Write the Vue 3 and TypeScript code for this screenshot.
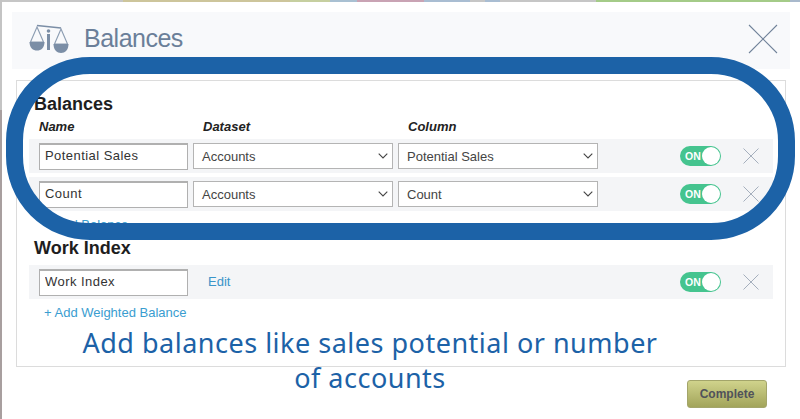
<script setup lang="ts">
interface Balance { name: string; dataset: string; column: string }
const balances: Balance[] = [
  { name: 'Potential Sales', dataset: 'Accounts', column: 'Potential Sales' },
  { name: 'Count', dataset: 'Accounts', column: 'Count' },
]
</script>

<template>
  <div class="page">
    <div class="backdrop-strip"></div>
    <main class="modal">
      <header class="head">
        <svg class="scale" viewBox="0 0 40 32" width="40" height="32">
          <path d="M8 2.5 L32 5" stroke="#7b8ea6" stroke-width="1.4" fill="none" />
          <circle cx="19.5" cy="8" r="1.8" fill="#7b8ea6" />
          <rect x="18" y="11" width="3" height="16" fill="#7b8ea6" />
          <path d="M8 4 L1.5 19 H14.5 Z M32 6 L25.5 21 H38.5 Z" stroke="#8c9db2" stroke-width="1.1" fill="none" />
          <path d="M0.5 19 H15.5 C15.5 25 12 27.5 8 27.5 C4 27.5 0.5 25 0.5 19 Z" fill="#7b8ea6" />
          <path d="M24.5 21 H39.5 C39.5 27 36 30 32 30 C28 30 24.5 27 24.5 21 Z" fill="#7b8ea6" />
        </svg>
        <h1 class="title">Balances</h1>
        <svg class="close" viewBox="0 0 30 30" width="30" height="30">
          <path d="M1 1 L29 29 M29 1 L1 29" stroke="#71839a" stroke-width="1.1" fill="none" />
        </svg>
      </header>

      <section class="panel">
        <h2 class="section-title">Balances</h2>
        <div class="labels">
          <span class="label-name">Name</span>
          <span class="label-dataset">Dataset</span>
          <span>Column</span>
        </div>

        <div v-for="b in balances" :key="b.name" class="row">
          <input class="name-input" :value="b.name" />
          <div class="select"><span>{{ b.dataset }}</span>
            <svg class="chev" viewBox="0 0 10 6" width="10" height="6"><path d="M.7 .7 L5 5 L9.3 .7" stroke="#444" stroke-width="1.1" fill="none" /></svg>
          </div>
          <div class="select"><span>{{ b.column }}</span>
            <svg class="chev" viewBox="0 0 10 6" width="10" height="6"><path d="M.7 .7 L5 5 L9.3 .7" stroke="#444" stroke-width="1.1" fill="none" /></svg>
          </div>
          <div class="toggle"><span>ON</span><i class="knob"></i></div>
          <svg class="row-x" viewBox="0 0 16 16" width="16" height="16"><path d="M.5 .5 L15.5 15.5 M15.5 .5 L.5 15.5" stroke="#a5afbd" stroke-width="1" fill="none" /></svg>
        </div>
        <a class="add add-balance">+ Add Balance</a>

        <h2 class="section-title work">Work Index</h2>
        <div class="row work-row">
          <input class="name-input" value="Work Index" />
          <a class="edit">Edit</a>
          <div class="toggle"><span>ON</span><i class="knob"></i></div>
          <svg class="row-x" viewBox="0 0 16 16" width="16" height="16"><path d="M.5 .5 L15.5 15.5 M15.5 .5 L.5 15.5" stroke="#a5afbd" stroke-width="1" fill="none" /></svg>
        </div>
        <a class="add">+ Add Weighted Balance</a>
      </section>

      <footer class="foot">
        <button class="complete">Complete</button>
      </footer>
    </main>

    <div class="oval"></div>
    <p class="note">Add balances like sales potential or number<br />of accounts</p>
  </div>
</template>

<style>
html, body { margin: 0; background: #fff; }
</style>

<style scoped>
.page {
  position: relative;
  width: 800px;
  height: 419px;
  overflow: hidden;
  background: #fff;
  font-family: "Liberation Sans", Arial, sans-serif;
  color: #222;
}
.page::before {
  content: "";
  position: absolute;
  left: 0;
  top: 0;
  width: 2px;
  height: 100%;
  background: linear-gradient(#c4c4c4 0 110px, #a89f9f 110px);
}
.backdrop-strip {
  height: 2px;
  background: linear-gradient(90deg,
    #c6c6c6 0 123px, #cdc59b 123px 290px, #c6cfa0 290px 330px, #a9c0d2 330px 357px,
    #c9a3b4 357px 424px, #a9bdd2 424px 470px, #c6c6c6 470px 485px, #a9bdd2 485px 500px,
    #c6c6c6 500px 596px, #a4cb88 596px 790px, #a9b9cc 790px);
}
.modal {
  padding: 10px 10px 0 12px;
}
.head {
  display: flex;
  align-items: center;
  height: 57px;
  width: 778px;
  padding: 0 12px 4px 17px;
  box-sizing: border-box;
  background: #f8f9fb;
}
.scale { flex: none; }
.title {
  flex: 1;
  margin: 0 0 0 15px;
  font-size: 25px;
  font-weight: 400;
  letter-spacing: -0.5px;
  color: #6b7f99;
}
.panel {
  box-sizing: border-box;
  width: 770px;
  height: 287px;
  margin: 11px 0 0 4px;
  padding: 13px 12px 0 12px;
  border: 1px solid #dcdcdc;
  display: flex;
  flex-direction: column;
}
.section-title {
  margin: 0;
  padding-left: 5px;
  font-size: 18px;
  line-height: 20px;
  font-weight: 700;
  color: #1e1e1e;
}
.labels {
  display: flex;
  padding-left: 10px;
  margin: 5px 0 5px;
  font-size: 13px;
  line-height: 15px;
  font-weight: 700;
  font-style: italic;
  color: #222;
}
.label-name { width: 164px; }
.label-dataset { width: 205px; }
.row {
  display: flex;
  align-items: center;
  width: 744px;
  height: 34px;
  margin-bottom: 4px;
  padding-left: 10px;
  box-sizing: border-box;
  background: #f4f5f7;
}
.name-input {
  box-sizing: border-box;
  width: 149px;
  height: 27px;
  padding: 0 5px 2px;
  border: 1px solid #b0b0b0;
  border-width: 2px 1px 1px 1px;
  border-radius: 0;
  outline: none;
  background: #fff;
  font: 13px "Liberation Sans", Arial, sans-serif;
  letter-spacing: .45px;
  color: #333;
}
.select {
  position: relative;
  box-sizing: border-box;
  width: 200px;
  height: 26px;
  margin-left: 5px;
  padding-left: 8px;
  display: flex;
  align-items: center;
  border: 1px solid #b4b4b4;
  background: #fff;
  font-size: 13px;
  color: #444;
}
.chev { position: absolute; right: 4px; top: 9px; }
.toggle {
  position: relative;
  box-sizing: border-box;
  width: 41px;
  height: 20px;
  margin-left: auto;
  padding-left: 5px;
  border-radius: 10px;
  background: #45c48f;
  display: flex;
  align-items: center;
  font-size: 10.5px;
  font-weight: 700;
  color: #fff;
}
.knob {
  position: absolute;
  right: 1px;
  top: 1px;
  width: 18px;
  height: 18px;
  border-radius: 50%;
  background: #fff;
}
.row-x { margin: 0 14px 0 22px; flex: none; }
.add {
  margin: 4px 0 0 15px;
  font-size: 13px;
  line-height: 15px;
  color: #3a9dd0;
}
.add-balance { margin-top: 2px; }
.work { margin-top: 6px; }
.work-row { margin: 7px 0 2px; }
.edit {
  margin-left: 20px;
  padding-bottom: 1px;
  font-size: 13px;
  color: #3a94c9;
}
.foot {
  display: flex;
  justify-content: flex-end;
  padding: 13px 23px 0 0;
}
.complete {
  box-sizing: border-box;
  width: 80px;
  height: 28px;
  padding: 0;
  border: 1px solid #a3a56a;
  border-radius: 3px;
  background: linear-gradient(#d0d38c, #a2a45a);
  font: 700 12px "Liberation Sans", Arial, sans-serif;
  color: #50525a;
}
.oval {
  position: absolute;
  left: 6px;
  top: 57px;
  width: 789px;
  height: 183px;
  box-sizing: border-box;
  border: 17px solid #1c62a7;
  border-radius: 84px;
  pointer-events: none;
}
.note {
  position: absolute;
  left: 0;
  top: 325px;
  width: 740px;
  margin: 0;
  text-align: center;
  font-family: "Noto Sans", sans-serif;
  font-size: 27px;
  font-weight: 400;
  line-height: 35px;
  letter-spacing: 0.5px;
  color: #1c62a7;
}
</style>
